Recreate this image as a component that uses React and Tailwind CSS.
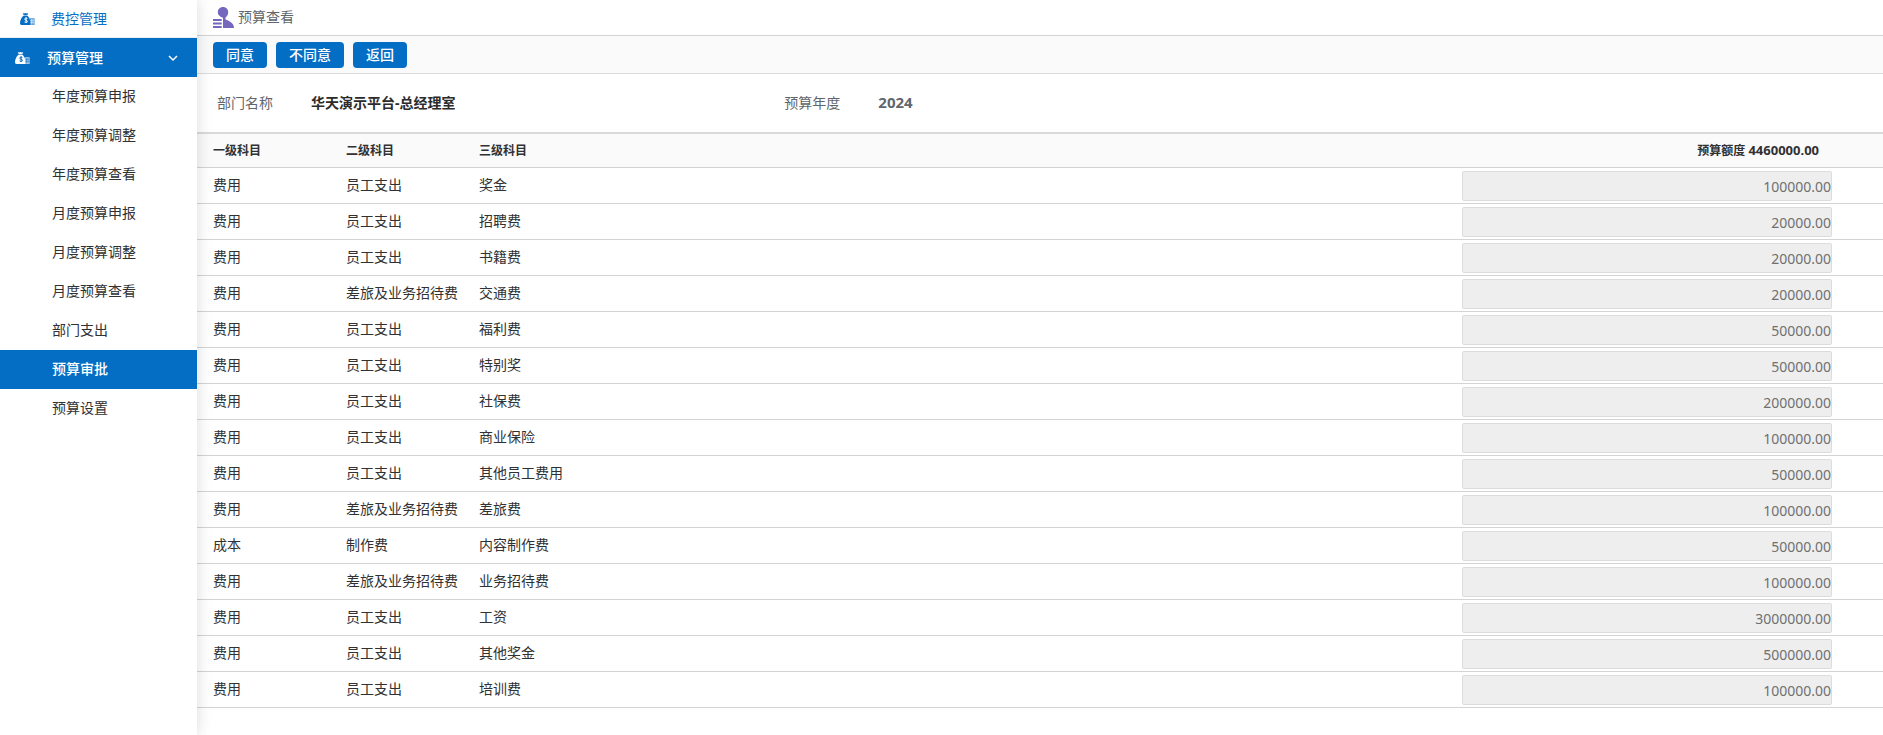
const menuItems = [
  '年度预算申报',
  '年度预算调整',
  '年度预算查看',
  '月度预算申报',
  '月度预算调整',
  '月度预算查看',
  '部门支出',
  '预算审批',
  '预算设置',
];

const budgetRows = [
  ['费用', '员工支出', '奖金', '100000.00'],
  ['费用', '员工支出', '招聘费', '20000.00'],
  ['费用', '员工支出', '书籍费', '20000.00'],
  ['费用', '差旅及业务招待费', '交通费', '20000.00'],
  ['费用', '员工支出', '福利费', '50000.00'],
  ['费用', '员工支出', '特别奖', '50000.00'],
  ['费用', '员工支出', '社保费', '200000.00'],
  ['费用', '员工支出', '商业保险', '100000.00'],
  ['费用', '员工支出', '其他员工费用', '50000.00'],
  ['费用', '差旅及业务招待费', '差旅费', '100000.00'],
  ['成本', '制作费', '内容制作费', '50000.00'],
  ['费用', '差旅及业务招待费', '业务招待费', '100000.00'],
  ['费用', '员工支出', '工资', '3000000.00'],
  ['费用', '员工支出', '其他奖金', '500000.00'],
  ['费用', '员工支出', '培训费', '100000.00'],
];

const MoneyBagIcon = ({ signClass }) => (
  <svg className="h-3 w-[15px] shrink-0" viewBox="0 0 15 12" fill="currentColor" aria-hidden="true">
    <path d="M2.8 0l1.4.5L5.500 0l1.300.5L8.200 0l-.9 2.300H3.700z" />
    <path d="M3.600 2.800h3.800c1.500 1.200 2.500 2.900 2.600 5V12H1.600C.5 12 0 11.300 0 10.300 0 7.200 1.500 4.300 3.600 2.800z" />
    <path d="M10.200 5.200H14.600V12H9.200V7z" opacity=".7" />
    <path
      className={signClass}
      d="M7.400 5.500C6.500 4.800 4.700 5 4.700 6.100c0 1.400 2.800.9 2.800 2.300 0 1.200-2 1.300-3 .5M6.100 4.300v5.700"
      fill="none"
      strokeWidth="1"
    />
    <path className={signClass} d="M10.200 7.300h4M10.200 9.300h4M11.500 6v5.500M13 6v5.500" fill="none" strokeWidth="0.5" />
  </svg>
);

const UserListIcon = () => (
  <svg className="h-[21px] w-[21px] shrink-0 text-[#7467bd]" viewBox="0 0 21 21" fill="currentColor" aria-hidden="true">
    <path d="M10 0c3 0 5.200 2.200 5.200 5.200 0 2.300-1.100 4.100-2.700 5.200v2.200c3.800 1.400 8.500 3.600 8.500 8.400H10V10.700C7.500 10 4.800 8 4.800 5.200 4.800 2.200 7 0 10 0z" />
    <path d="M0 12h8.700v2H0zM0 15.500h8.700v2H0zM0 19h8.700v2H0z" />
  </svg>
);

const Sidebar = () => (
  <nav className="relative z-10 w-[197px] shrink-0 bg-white text-sm text-[#303133] shadow-[0_0_14px_rgba(40,50,70,0.18)]">
    <a href="#cost" className="flex h-[38px] items-center border-b border-[#eeeeee] pl-5 text-[#046ec4]">
      <MoneyBagIcon signClass="stroke-white" />
      <span className="ml-4">费控管理</span>
    </a>
    <button type="button" className="flex h-[39px] w-full items-center bg-[#046ec4] pr-[18px] pl-[15px] text-white">
      <MoneyBagIcon signClass="stroke-[#046ec4]" />
      <span className="ml-[17px] flex-1 text-left font-medium">预算管理</span>
      <svg className="h-3 w-3" viewBox="0 0 12 12" fill="none" stroke="currentColor" strokeWidth="1.5" aria-hidden="true">
        <path d="M2 4l4 4 4-4" />
      </svg>
    </button>
    <ul>
      {menuItems.map((item) => (
        <li key={item}>
          <a
            href="#menu"
            className={`flex h-[39px] items-center pb-[2px] pl-[52px] ${
              item === '预算审批' ? 'bg-[#046ec4] font-medium text-white' : ''
            }`}
          >
            {item}
          </a>
        </li>
      ))}
    </ul>
  </nav>
);

const ActionButton = ({ children }) => (
  <button type="button" className="h-[26px] rounded bg-[#046ec4] px-[13px] text-sm leading-5 font-medium text-white">
    {children}
  </button>
);

const BudgetTable = () => (
  <table className="w-full table-fixed border-separate border-spacing-0 text-left text-sm text-[#303133]">
    <colgroup>
      <col className="w-[149px]" />
      <col className="w-[133px]" />
      <col />
      <col className="w-1/4" />
    </colgroup>
    <thead>
      <tr className="h-[34px] bg-[#fafafa] text-xs">
        <th className="border-b border-[#d3d3d3] pl-4">一级科目</th>
        <th className="border-b border-[#d3d3d3]">二级科目</th>
        <th className="border-b border-[#d3d3d3]">三级科目</th>
        <th className="border-b border-[#d3d3d3] pr-16 text-right">
          预算额度 <span className="text-[13px]">4460000.00</span>
        </th>
      </tr>
    </thead>
    <tbody>
      {budgetRows.map(([first, second, third, amount]) => (
        <tr key={third} className="h-9">
          <td className="border-b border-[#d3d3d3] pb-[2px] pl-4">{first}</td>
          <td className="border-b border-[#d3d3d3] pb-[2px]">{second}</td>
          <td className="border-b border-[#d3d3d3] pb-[2px]">{third}</td>
          <td className="border-b border-[#d3d3d3] pt-[3px] pr-[51px] pb-[2px]">
            <input
              type="text"
              aria-label={third}
              value={amount}
              disabled
              className="block h-[30px] w-full rounded-xs border border-[#dcdcdc] bg-[#eeeeee] text-right text-sm text-[#707070]"
            />
          </td>
        </tr>
      ))}
    </tbody>
  </table>
);

export default function App() {
  return (
    <div className="flex min-h-screen bg-white font-['Noto_Sans','Noto_Sans_CJK_SC',sans-serif]">
      <Sidebar />
      <main className="min-w-0 flex-1">
        <header className="flex h-9 items-center border-b border-[#d3d3d3] pl-4">
          <UserListIcon />
          <h1 className="ml-1 pb-[2px] text-sm text-[#5f666d]">预算查看</h1>
        </header>
        <div className="flex h-[38px] items-center gap-[9px] border-b border-[#dcdcdc] bg-[#fafafa] pl-4">
          <ActionButton>同意</ActionButton>
          <ActionButton>不同意</ActionButton>
          <ActionButton>返回</ActionButton>
        </div>
        <dl className="grid h-[60px] grid-cols-3 items-center border-b-2 border-[#d9d9d9] pl-5 text-sm text-[#5f666d]">
          <div className="flex items-center">
            <dt className="w-[94px]">部门名称</dt>
            <dd className="font-bold text-[#2b2b2b]">华天演示平台-总经理室</dd>
          </div>
          <div className="flex items-center pl-3">
            <dt className="w-[94px]">预算年度</dt>
            <dd className="text-[15px] font-bold">2024</dd>
          </div>
        </dl>
        <BudgetTable />
      </main>
    </div>
  );
}
